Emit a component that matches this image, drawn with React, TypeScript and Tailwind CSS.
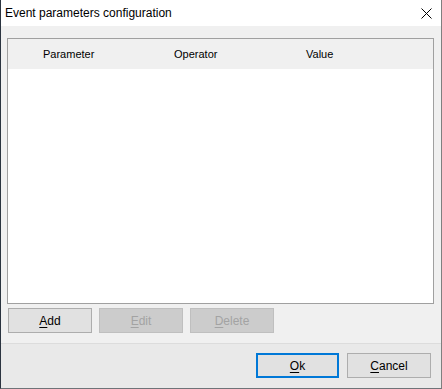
import React from 'react';

const font = "font-['Segoe_UI','Liberation_Sans',Arial,sans-serif]";

const Btn: React.FC<{ k: string; rest: string; disabled?: boolean; focus?: boolean; w?: string }> = ({ k, rest, disabled, focus, w = 'w-[84px]' }) => {
  const cls = disabled
    ? 'bg-[#cccccc] border border-[#bfbfbf] text-[#a3a3a3]'
    : focus
      ? 'bg-[#e1e1e1] border-2 border-[#0078d7] text-black'
      : 'bg-[#e1e1e1] border border-[#adadad] text-black';
  return (
    <button className={`${cls} ${w} h-[25px] flex items-center justify-center text-[12px] leading-none`}>
      <span>
        <span className="underline underline-offset-2">{k}</span>
        {rest}
      </span>
    </button>
  );
};

export default function App() {
  return (
    <div className={`${font} w-[442px] h-[389px] flex flex-col border-l border-l-[#2b3440] border-r border-r-[#7f7f7f] border-b border-b-[#6f7378] bg-[#f0f0f0]`}>
      <div className="h-[26px] bg-white flex items-center justify-between pl-[4px] pr-[9px] shrink-0">
        <span className="text-[12px] text-black">Event parameters configuration</span>
        <svg width="11" height="11" viewBox="0 0 11 11" className="mt-[1px]">
          <path d="M0.5 0.5 L10.5 10.5 M10.5 0.5 L0.5 10.5" stroke="#000" strokeWidth="1" />
        </svg>
      </div>

      <div className="flex-1 flex flex-col pt-[12px] pl-[6px] pr-[7px]">
        <div className="h-[266px] border border-[#a0a0a0] bg-white flex flex-col">
          <div className="h-[30px] bg-[#f0f0f0] flex items-center text-[11px] text-black relative">
            <span className="absolute left-[35px]">Parameter</span>
            <span className="absolute left-[166px]">Operator</span>
            <span className="absolute left-[298px]">Value</span>
          </div>
          <div className="flex-1 bg-white" />
        </div>
        <div className="flex gap-[7px] mt-[4px] ml-[1px]">
          <Btn k="A" rest="dd" />
          <Btn k="E" rest="dit" disabled />
          <Btn k="D" rest="elete" disabled />
        </div>
      </div>

      <div className="h-[45px] shrink-0 border-t border-t-[#dcdcdc] bg-[#e9e9e9] flex items-start justify-end gap-[8px] pt-[9px] pr-[10px]">
        <Btn k="O" rest="k" focus w="w-[83px]" />
        <Btn k="C" rest="ancel" />
      </div>
    </div>
  );
}
